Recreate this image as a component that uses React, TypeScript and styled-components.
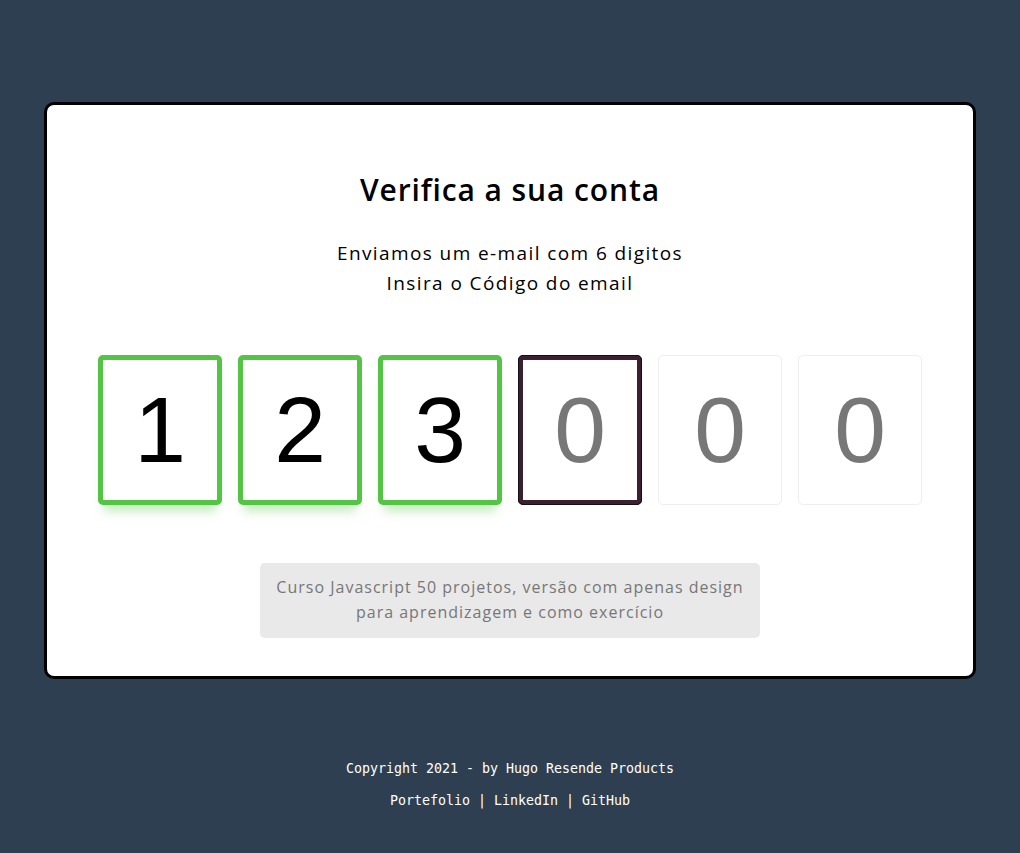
import React from "react";
import styled, { createGlobalStyle, css } from "styled-components";

const Global = createGlobalStyle`
  * { box-sizing: border-box; }
  html, body { margin: 0; padding: 0; }
  body {
    background: #2f3f52;
    font-family: "Open Sans", "Noto Sans", sans-serif;
  }
`;

const Page = styled.div`
  display: flex;
  flex-direction: column;
  align-items: center;
  padding-top: 102px;
`;

const Card = styled.div`
  width: 932px;
  height: 577px;
  background: #fff;
  border: 3px solid #000;
  border-radius: 10px;
  display: flex;
  flex-direction: column;
  align-items: center;
  padding-top: 65px;
`;

const Title = styled.h2`
  margin: 0;
  font-size: 30px;
  font-weight: 600;
  line-height: 40px;
  color: #000;
  letter-spacing: 0.9px;
`;

const Sub = styled.p`
  margin: 28px 0 0;
  font-size: 19px;
  line-height: 30px;
  text-align: center;
  color: #000;
  letter-spacing: 1.4px;
`;

const Row = styled.div`
  display: flex;
  gap: 16px;
  margin-top: 57px;
`;

const Digit = styled.div<{ $state: "filled" | "active" | "empty" }>`
  width: 124px;
  height: 150px;
  border-radius: 5px;
  display: flex;
  align-items: center;
  justify-content: center;
  font-family: "Liberation Sans", Arial, sans-serif;
  font-size: 93px;
  ${({ $state }) =>
    $state === "filled"
      ? css`
          border: 5px solid #53c443;
          color: #000;
          box-shadow: 0 12px 10px -6px rgba(83, 196, 67, 0.35);
        `
      : $state === "active"
      ? css`
          border: 5px solid #3c1f30;
          outline: 1px solid #111;
          outline-offset: -1px;
          color: #777;
        `
      : css`
          border: 1px solid #eee;
          color: #777;
        `}
`;

const Info = styled.div`
  margin-top: 58px;
  width: 500px;
  background: #e9e9e9;
  border-radius: 5px;
  padding: 12px 10px 13px;
  font-size: 16px;
  line-height: 25px;
  color: #777;
  text-align: center;
  letter-spacing: 1px;
`;

const Footer = styled.footer`
  margin-top: 80px;
  display: flex;
  flex-direction: column;
  align-items: center;
  gap: 13px;
  color: #fff;
  font-family: "DejaVu Sans Mono", "Liberation Mono", monospace;
  font-size: 13.3px;
  line-height: 19px;
`;

const digits: { v: string; s: "filled" | "active" | "empty" }[] = [
  { v: "1", s: "filled" },
  { v: "2", s: "filled" },
  { v: "3", s: "filled" },
  { v: "0", s: "active" },
  { v: "0", s: "empty" },
  { v: "0", s: "empty" },
];

export default function App() {
  return (
    <>
      <Global />
      <Page>
        <Card>
          <Title>Verifica a sua conta</Title>
          <Sub>
            Enviamos um e-mail com 6 digitos
            <br />
            Insira o Código do email
          </Sub>
          <Row>
            {digits.map((d, i) => (
              <Digit key={i} $state={d.s}>
                {d.v}
              </Digit>
            ))}
          </Row>
          <Info>
            Curso Javascript 50 projetos, versão com apenas design para
            aprendizagem e como exercício
          </Info>
        </Card>
        <Footer>
          <div>Copyright 2021 - by Hugo Resende Products</div>
          <div>Portefolio | LinkedIn | GitHub</div>
        </Footer>
      </Page>
    </>
  );
}
